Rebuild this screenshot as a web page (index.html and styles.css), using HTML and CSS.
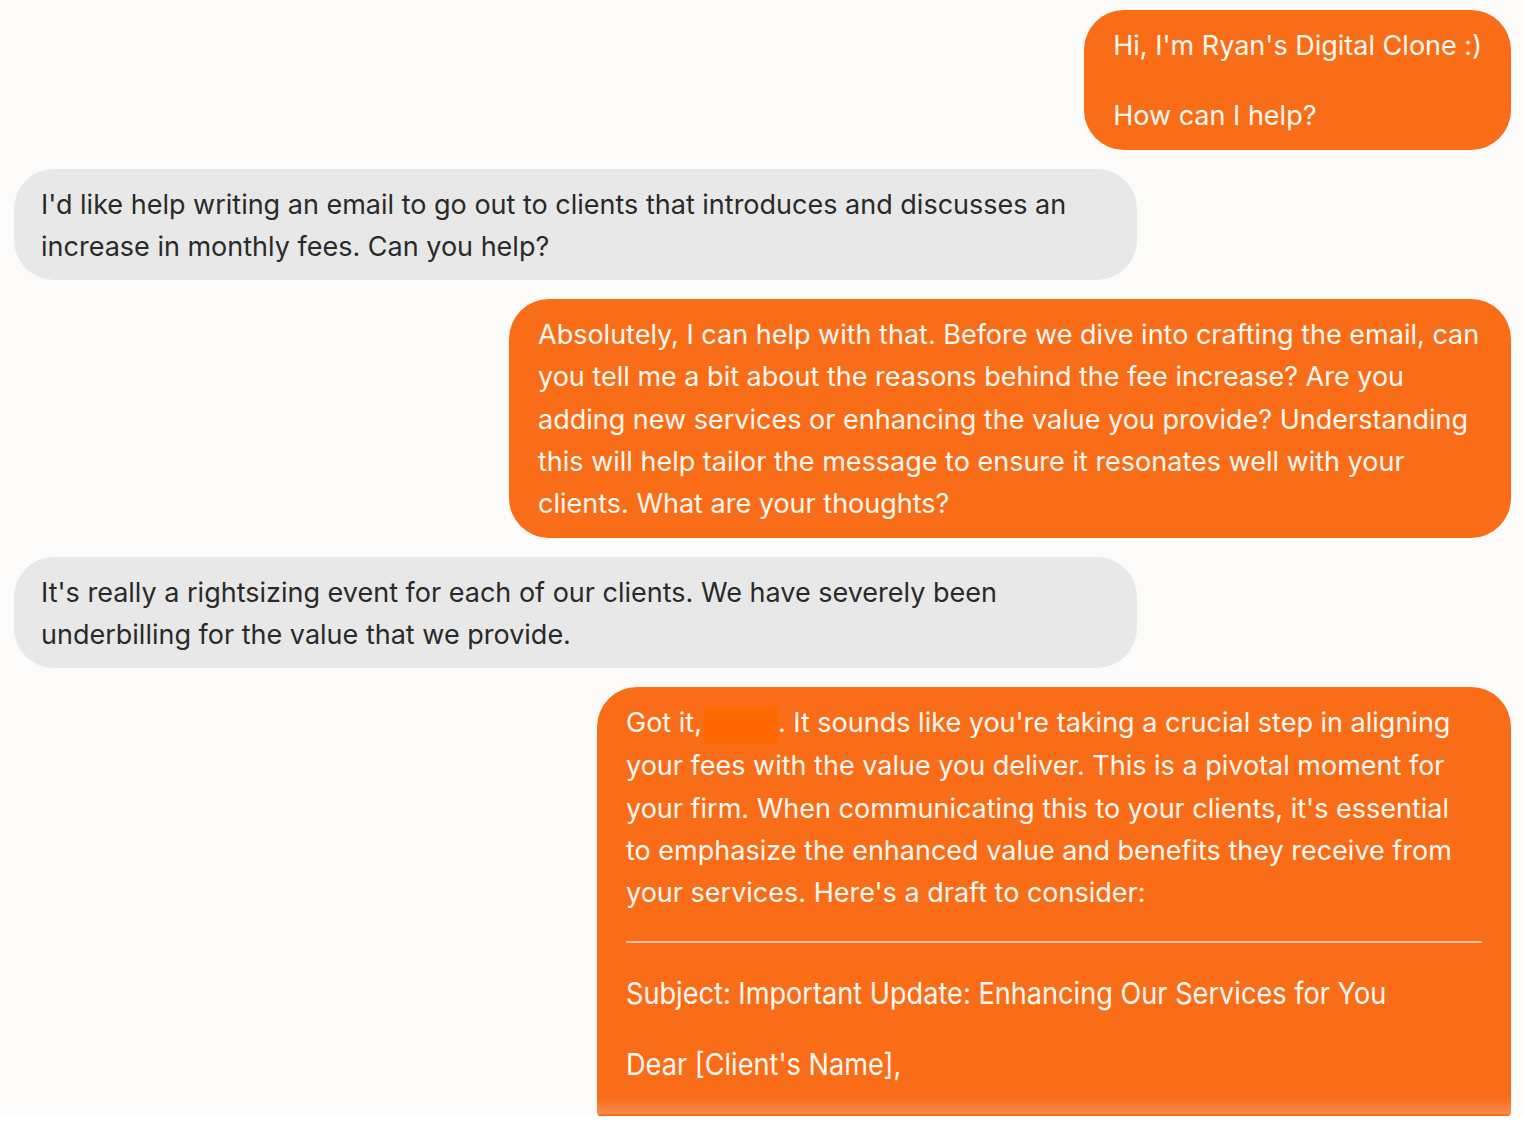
FILE: index.html
```html
<!DOCTYPE html>
<html>
<head>
<meta charset="utf-8">
<link rel="stylesheet" href="styles.css">
</head>
<body>
<div class="chat">
  <div class="msg bot first">
    <p>Hi, I'm Ryan's Digital Clone :)</p>
    <p>How can I help?</p>
  </div>
  <div class="msg user">
    <p>I'd like help writing an email to go out to clients that introduces and discusses an increase in monthly fees. Can you help?</p>
  </div>
  <div class="msg bot wide">
    <p>Absolutely, I can help with that. Before we dive into crafting the email, can you tell me a bit about the reasons behind the fee increase? Are you adding new services or enhancing the value you provide? Understanding this will help tailor the message to ensure it resonates well with your clients. What are your thoughts?</p>
  </div>
  <div class="msg user">
    <p>It's really a rightsizing event for each of our clients. We have severely been underbilling for the value that we provide.</p>
  </div>
  <div class="msg bot last">
    <p class="intro">Got it,<span class="redact"></span>. It sounds like you're taking a crucial step in aligning your fees with the value you deliver. This is a pivotal moment for your firm. When communicating this to your clients, it's essential to emphasize the enhanced value and benefits they receive from your services. Here's a draft to consider:</p>
    <hr class="rule">
    <p class="narrow">Subject: Important Update: Enhancing Our Services for You</p>
    <p class="narrow">Dear [Client's Name],</p>
    <div class="fade"></div>
  </div>
</div>
</body>
</html>
```

FILE: styles.css
```css
html, body {
  margin: 0;
  padding: 0;
  background: #ffffff;
}
body {
  font-family: Inter, "Noto Sans", sans-serif;
}
.chat {
  background: #fcfbfa;
  height: 1116px;
  overflow: hidden;
  box-sizing: border-box;
  padding: 10px 13px 0 14px;
  display: flex;
  flex-direction: column;
  gap: 19px;
}
.msg {
  box-sizing: border-box;
  border-radius: 40px;
  padding: 15px 29px 12px 27px;
  font-size: 27px;
  line-height: 42.3px;
  max-width: 1123px;
  width: fit-content;
  flex-shrink: 0;
}
.msg p {
  margin: 0;
}
.msg p + p {
  margin-top: 28px;
}
.bot {
  align-self: flex-end;
  background: #f96d18;
  color: #fff8f2;
  padding-left: 29px;
  max-width: 999px;
}
.bot.wide {
  max-width: 1002px;
  padding-right: 27px;
}
.user {
  align-self: flex-start;
  background: #e8e8e8;
  color: #2a2a2a;
}
.bot.last {
  width: 914px;
  position: relative;
  padding-bottom: 60px;
}
.intro {
  padding-right: 20px;
}
.redact {
  display: inline-block;
  width: 74px;
  height: 39px;
  margin-left: 2px;
  background: #ff6a00;
  vertical-align: -13px;
}
.rule {
  border: none;
  border-top: 2px solid rgba(220, 220, 220, 0.75);
  margin: 27px 0 29px 0;
}
.msg .rule + p {
  margin-top: 0;
}
.narrow {
  font-size: 30px;
  transform: scaleX(0.905);
  transform-origin: left center;
  white-space: nowrap;
}
.fade {
  position: absolute;
  left: 0;
  right: 0;
  top: 411px;
  height: 16px;
  background: linear-gradient(to bottom, rgba(251, 140, 78, 0), rgba(251, 140, 78, 1));
}
```
